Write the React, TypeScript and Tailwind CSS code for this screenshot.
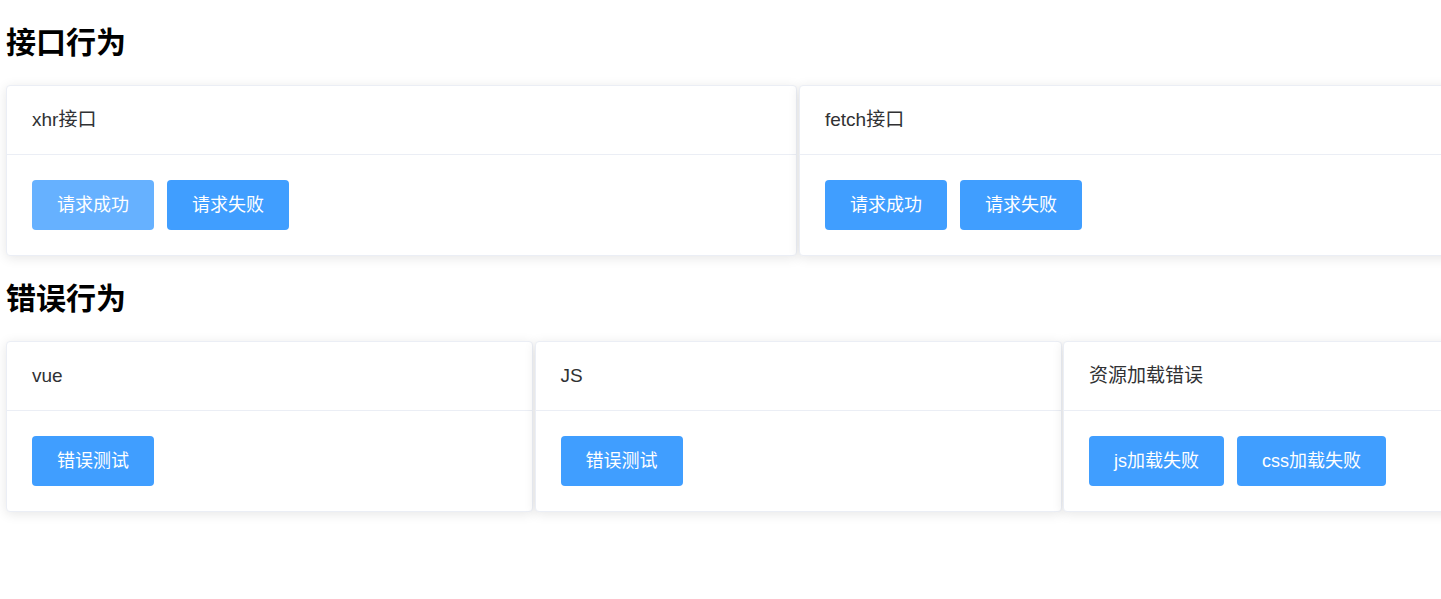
import React from 'react';

const font = { fontFamily: '"Liberation Sans", "Noto Sans CJK SC", sans-serif' };

const Btn = ({ label, light }: { label: string; light?: boolean }) => (
  <button
    className={`h-[50px] px-[25px] rounded-[4px] text-white text-[18px] leading-none ${
      light ? 'bg-[#66b1ff]' : 'bg-[#409eff]'
    }`}
  >
    {label}
  </button>
);

const Card = ({ title, buttons, width }: { title: string; buttons: { label: string; light?: boolean }[]; width: string }) => (
  <div className={`${width} shrink-0 bg-white border border-[#ebeef5] rounded-[4px] shadow-[0_2px_12px_0_rgba(0,0,0,0.1)]`}>
    <div className="h-[69px] px-[25px] pt-[1px] flex items-center border-b border-[#ebeef5] text-[19px] text-[#303133]">
      {title}
    </div>
    <div className="p-[25px] flex gap-[13px]">
      {buttons.map((b) => (
        <Btn key={b.label} label={b.label} light={b.light} />
      ))}
    </div>
  </div>
);

const App = () => {
  return (
    <div className="w-[1441px] h-[599px] overflow-hidden bg-white pl-[6px]" style={font}>
      <h2 className="h-[85px] flex items-center text-[30px] font-bold text-black">接口行为</h2>
      <div className="flex gap-[2px]">
        <Card
          width="w-[791px]"
          title="xhr接口"
          buttons={[{ label: '请求成功', light: true }, { label: '请求失败' }]}
        />
        <Card width="w-[791px]" title="fetch接口" buttons={[{ label: '请求成功' }, { label: '请求失败' }]} />
      </div>
      <h2 className="h-[85px] flex items-center text-[30px] font-bold text-black">错误行为</h2>
      <div className="flex gap-[1.5px]">
        <Card width="w-[527px]" title="vue" buttons={[{ label: '错误测试' }]} />
        <Card width="w-[527px]" title="JS" buttons={[{ label: '错误测试' }]} />
        <Card width="w-[527px]" title="资源加载错误" buttons={[{ label: 'js加载失败' }, { label: 'css加载失败' }]} />
      </div>
    </div>
  );
};

export default App;
